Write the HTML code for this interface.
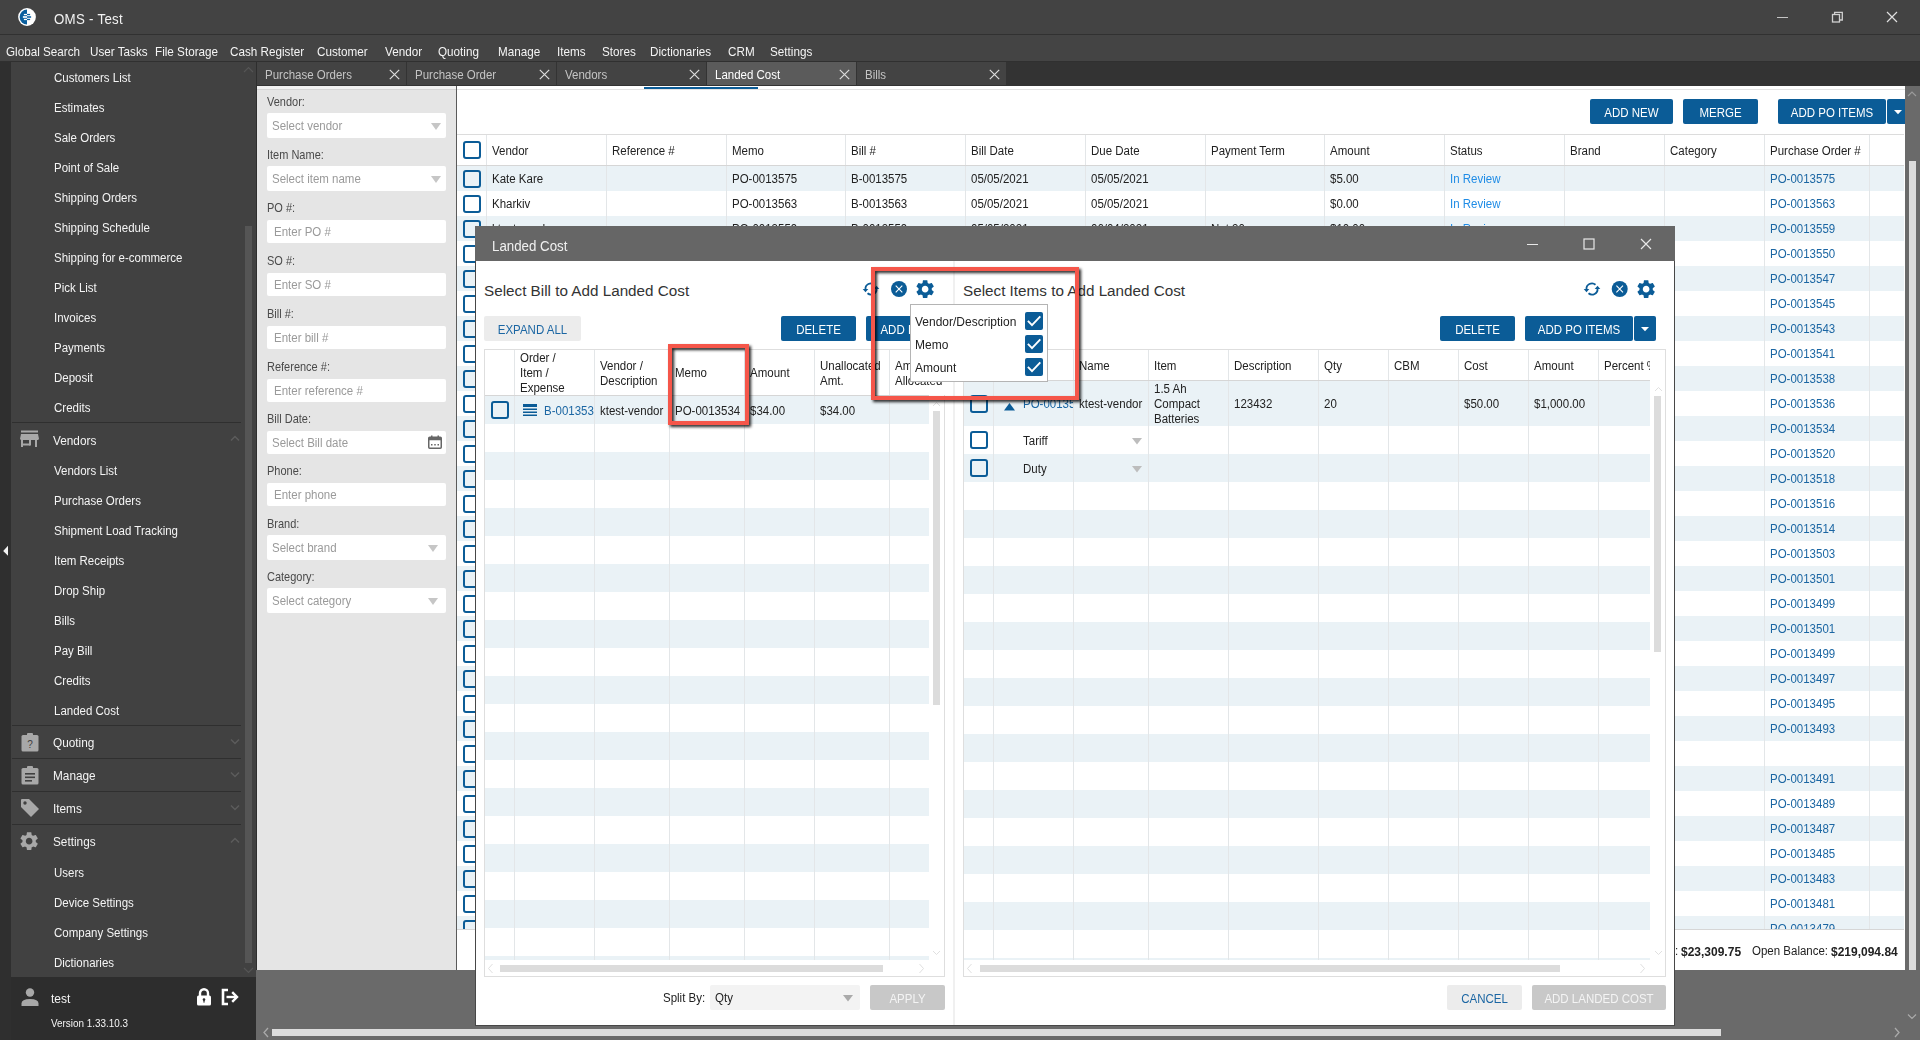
<!DOCTYPE html><html><head><meta charset="utf-8"><style>
html,body{margin:0;padding:0;} body{width:1920px;height:1040px;overflow:hidden;position:relative;background:#6a6a6a;font-family:"Liberation Sans", sans-serif;}
.t{position:absolute;white-space:nowrap;}
</style></head><body>
<div style="position:absolute;left:0px;top:0px;width:1920px;height:34px;background:#434343"></div>
<div style="position:absolute;left:0px;top:34px;width:1920px;height:1px;background:#313131"></div>
<svg style="position:absolute;left:17px;top:7px;" width="20" height="20" viewBox="0 0 20 20"><circle cx="10" cy="10" r="8.9" fill="#fff"/><path d="M10 2.6 A7.4 7.4 0 0 0 10 17.4 Z" fill="#0a5f9e"/><rect x="6.9" y="6.9" width="3.1" height="1.3" fill="#fff"/><rect x="10" y="6.9" width="3.1" height="1.3" fill="#0a5f9e"/><rect x="5.9" y="9.0" width="4.1" height="2" fill="#d5e4ef"/><rect x="10" y="9.0" width="4.1" height="2" fill="#3f84b8"/><rect x="6.9" y="11.8" width="3.1" height="1.3" fill="#fff"/><rect x="10" y="11.8" width="3.1" height="1.3" fill="#0a5f9e"/></svg>
<div class="t" style="left:54px;top:11.59px;font-size:14.90px;line-height:14.90px;color:#f2f2f2;font-weight:normal;transform:scaleX(0.8929);transform-origin:0 0;letter-spacing:0.3px">OMS - Test</div>
<div style="position:absolute;left:1777px;top:16.5px;width:11px;height:1.6px;background:#c4c4c4"></div>
<svg style="position:absolute;left:1831px;top:11px;" width="13" height="12" viewBox="0 0 13 12"><rect x="1.5" y="3.5" width="7" height="7.5" fill="none" stroke="#d0d0d0" stroke-width="1.3"/><path d="M3.6 3.5 V1.3 H11.3 V9 H8.5" fill="none" stroke="#d0d0d0" stroke-width="1.3"/></svg>
<svg style="position:absolute;left:1886px;top:11px;" width="12" height="12" viewBox="0 0 12 12"><path d="M1 1 L11 11 M11 1 L1 11" stroke="#e0e0e0" stroke-width="1.2"/></svg>
<div style="position:absolute;left:0px;top:35px;width:1920px;height:26px;background:#444444"></div>
<div style="position:absolute;left:0px;top:61px;width:1920px;height:1px;background:#303030"></div>
<div class="t" style="left:6px;top:45.11px;font-size:13.10px;line-height:13.10px;color:#f4f4f4;font-weight:normal;transform:scaleX(0.8929);transform-origin:0 0;">Global Search</div>
<div class="t" style="left:90px;top:45.11px;font-size:13.10px;line-height:13.10px;color:#f4f4f4;font-weight:normal;transform:scaleX(0.8929);transform-origin:0 0;">User Tasks</div>
<div class="t" style="left:155px;top:45.11px;font-size:13.10px;line-height:13.10px;color:#f4f4f4;font-weight:normal;transform:scaleX(0.8929);transform-origin:0 0;">File Storage</div>
<div class="t" style="left:230px;top:45.11px;font-size:13.10px;line-height:13.10px;color:#f4f4f4;font-weight:normal;transform:scaleX(0.8929);transform-origin:0 0;">Cash Register</div>
<div class="t" style="left:317px;top:45.11px;font-size:13.10px;line-height:13.10px;color:#f4f4f4;font-weight:normal;transform:scaleX(0.8929);transform-origin:0 0;">Customer</div>
<div class="t" style="left:385px;top:45.11px;font-size:13.10px;line-height:13.10px;color:#f4f4f4;font-weight:normal;transform:scaleX(0.8929);transform-origin:0 0;">Vendor</div>
<div class="t" style="left:438px;top:45.11px;font-size:13.10px;line-height:13.10px;color:#f4f4f4;font-weight:normal;transform:scaleX(0.8929);transform-origin:0 0;">Quoting</div>
<div class="t" style="left:498px;top:45.11px;font-size:13.10px;line-height:13.10px;color:#f4f4f4;font-weight:normal;transform:scaleX(0.8929);transform-origin:0 0;">Manage</div>
<div class="t" style="left:557px;top:45.11px;font-size:13.10px;line-height:13.10px;color:#f4f4f4;font-weight:normal;transform:scaleX(0.8929);transform-origin:0 0;">Items</div>
<div class="t" style="left:602px;top:45.11px;font-size:13.10px;line-height:13.10px;color:#f4f4f4;font-weight:normal;transform:scaleX(0.8929);transform-origin:0 0;">Stores</div>
<div class="t" style="left:650px;top:45.11px;font-size:13.10px;line-height:13.10px;color:#f4f4f4;font-weight:normal;transform:scaleX(0.8929);transform-origin:0 0;">Dictionaries</div>
<div class="t" style="left:728px;top:45.11px;font-size:13.10px;line-height:13.10px;color:#f4f4f4;font-weight:normal;transform:scaleX(0.8929);transform-origin:0 0;">CRM</div>
<div class="t" style="left:770px;top:45.11px;font-size:13.10px;line-height:13.10px;color:#f4f4f4;font-weight:normal;transform:scaleX(0.8929);transform-origin:0 0;">Settings</div>
<div style="position:absolute;left:0px;top:62px;width:11px;height:978px;background:#2f2f2f"></div>
<div style="position:absolute;left:11px;top:62px;width:245px;height:915px;background:#414141"></div>
<div style="position:absolute;left:256px;top:62px;width:1px;height:908px;background:#2e2e2e"></div>
<div style="position:absolute;left:245px;top:226px;width:7px;height:737px;background:#555555"></div>
<svg style="position:absolute;left:243px;top:66px;" width="11" height="8" viewBox="0 0 11 8"><path d="M1 6 L5.5 1.5 L10 6" fill="none" stroke="#555" stroke-width="1.2"/></svg>
<svg style="position:absolute;left:243px;top:966px;" width="11" height="8" viewBox="0 0 11 8"><path d="M1 2 L5.5 6.5 L10 2" fill="none" stroke="#555" stroke-width="1.2"/></svg>
<div class="t" style="left:54px;top:72.30px;font-size:12.88px;line-height:12.88px;color:#f4f4f4;font-weight:normal;transform:scaleX(0.8929);transform-origin:0 0;">Customers List</div>
<div class="t" style="left:54px;top:102.30px;font-size:12.88px;line-height:12.88px;color:#f4f4f4;font-weight:normal;transform:scaleX(0.8929);transform-origin:0 0;">Estimates</div>
<div class="t" style="left:54px;top:132.30px;font-size:12.88px;line-height:12.88px;color:#f4f4f4;font-weight:normal;transform:scaleX(0.8929);transform-origin:0 0;">Sale Orders</div>
<div class="t" style="left:54px;top:162.30px;font-size:12.88px;line-height:12.88px;color:#f4f4f4;font-weight:normal;transform:scaleX(0.8929);transform-origin:0 0;">Point of Sale</div>
<div class="t" style="left:54px;top:192.30px;font-size:12.88px;line-height:12.88px;color:#f4f4f4;font-weight:normal;transform:scaleX(0.8929);transform-origin:0 0;">Shipping Orders</div>
<div class="t" style="left:54px;top:222.30px;font-size:12.88px;line-height:12.88px;color:#f4f4f4;font-weight:normal;transform:scaleX(0.8929);transform-origin:0 0;">Shipping Schedule</div>
<div class="t" style="left:54px;top:252.30px;font-size:12.88px;line-height:12.88px;color:#f4f4f4;font-weight:normal;transform:scaleX(0.8929);transform-origin:0 0;">Shipping for e-commerce</div>
<div class="t" style="left:54px;top:282.30px;font-size:12.88px;line-height:12.88px;color:#f4f4f4;font-weight:normal;transform:scaleX(0.8929);transform-origin:0 0;">Pick List</div>
<div class="t" style="left:54px;top:312.30px;font-size:12.88px;line-height:12.88px;color:#f4f4f4;font-weight:normal;transform:scaleX(0.8929);transform-origin:0 0;">Invoices</div>
<div class="t" style="left:54px;top:342.30px;font-size:12.88px;line-height:12.88px;color:#f4f4f4;font-weight:normal;transform:scaleX(0.8929);transform-origin:0 0;">Payments</div>
<div class="t" style="left:54px;top:372.30px;font-size:12.88px;line-height:12.88px;color:#f4f4f4;font-weight:normal;transform:scaleX(0.8929);transform-origin:0 0;">Deposit</div>
<div class="t" style="left:54px;top:402.30px;font-size:12.88px;line-height:12.88px;color:#f4f4f4;font-weight:normal;transform:scaleX(0.8929);transform-origin:0 0;">Credits</div>
<div style="position:absolute;left:12px;top:422px;width:229px;height:1px;background:#2f2f2f"></div>
<div style="position:absolute;left:12px;top:725px;width:229px;height:1px;background:#2f2f2f"></div>
<div style="position:absolute;left:12px;top:758px;width:229px;height:1px;background:#2f2f2f"></div>
<div style="position:absolute;left:12px;top:791px;width:229px;height:1px;background:#2f2f2f"></div>
<div style="position:absolute;left:12px;top:824px;width:229px;height:1px;background:#2f2f2f"></div>
<div class="t" style="left:53px;top:434.01px;font-size:13.22px;line-height:13.22px;color:#f4f4f4;font-weight:normal;transform:scaleX(0.8929);transform-origin:0 0;">Vendors</div>
<div class="t" style="left:54px;top:465.30px;font-size:12.88px;line-height:12.88px;color:#f4f4f4;font-weight:normal;transform:scaleX(0.8929);transform-origin:0 0;">Vendors List</div>
<div class="t" style="left:54px;top:495.30px;font-size:12.88px;line-height:12.88px;color:#f4f4f4;font-weight:normal;transform:scaleX(0.8929);transform-origin:0 0;">Purchase Orders</div>
<div class="t" style="left:54px;top:525.30px;font-size:12.88px;line-height:12.88px;color:#f4f4f4;font-weight:normal;transform:scaleX(0.8929);transform-origin:0 0;">Shipment Load Tracking</div>
<div class="t" style="left:54px;top:555.30px;font-size:12.88px;line-height:12.88px;color:#f4f4f4;font-weight:normal;transform:scaleX(0.8929);transform-origin:0 0;">Item Receipts</div>
<div class="t" style="left:54px;top:585.30px;font-size:12.88px;line-height:12.88px;color:#f4f4f4;font-weight:normal;transform:scaleX(0.8929);transform-origin:0 0;">Drop Ship</div>
<div class="t" style="left:54px;top:615.30px;font-size:12.88px;line-height:12.88px;color:#f4f4f4;font-weight:normal;transform:scaleX(0.8929);transform-origin:0 0;">Bills</div>
<div class="t" style="left:54px;top:645.30px;font-size:12.88px;line-height:12.88px;color:#f4f4f4;font-weight:normal;transform:scaleX(0.8929);transform-origin:0 0;">Pay Bill</div>
<div class="t" style="left:54px;top:675.30px;font-size:12.88px;line-height:12.88px;color:#f4f4f4;font-weight:normal;transform:scaleX(0.8929);transform-origin:0 0;">Credits</div>
<div class="t" style="left:54px;top:705.30px;font-size:12.88px;line-height:12.88px;color:#f4f4f4;font-weight:normal;transform:scaleX(0.8929);transform-origin:0 0;">Landed Cost</div>
<div class="t" style="left:53px;top:736.01px;font-size:13.22px;line-height:13.22px;color:#f4f4f4;font-weight:normal;transform:scaleX(0.8929);transform-origin:0 0;">Quoting</div>
<div class="t" style="left:53px;top:769.01px;font-size:13.22px;line-height:13.22px;color:#f4f4f4;font-weight:normal;transform:scaleX(0.8929);transform-origin:0 0;">Manage</div>
<div class="t" style="left:53px;top:802.01px;font-size:13.22px;line-height:13.22px;color:#f4f4f4;font-weight:normal;transform:scaleX(0.8929);transform-origin:0 0;">Items</div>
<div class="t" style="left:53px;top:835.01px;font-size:13.22px;line-height:13.22px;color:#f4f4f4;font-weight:normal;transform:scaleX(0.8929);transform-origin:0 0;">Settings</div>
<div class="t" style="left:54px;top:867.30px;font-size:12.88px;line-height:12.88px;color:#f4f4f4;font-weight:normal;transform:scaleX(0.8929);transform-origin:0 0;">Users</div>
<div class="t" style="left:54px;top:897.30px;font-size:12.88px;line-height:12.88px;color:#f4f4f4;font-weight:normal;transform:scaleX(0.8929);transform-origin:0 0;">Device Settings</div>
<div class="t" style="left:54px;top:927.30px;font-size:12.88px;line-height:12.88px;color:#f4f4f4;font-weight:normal;transform:scaleX(0.8929);transform-origin:0 0;">Company Settings</div>
<div class="t" style="left:54px;top:957.30px;font-size:12.88px;line-height:12.88px;color:#f4f4f4;font-weight:normal;transform:scaleX(0.8929);transform-origin:0 0;">Dictionaries</div>
<svg style="position:absolute;left:230px;top:435px;" width="10" height="7" viewBox="0 0 10 7"><path d="M1 5.5 L5 1.5 L9 5.5" fill="none" stroke="#5c5c5c" stroke-width="1.5"/></svg>
<svg style="position:absolute;left:230px;top:738px;" width="10" height="7" viewBox="0 0 10 7"><path d="M1 1.5 L5 5.5 L9 1.5" fill="none" stroke="#5c5c5c" stroke-width="1.5"/></svg>
<svg style="position:absolute;left:230px;top:771px;" width="10" height="7" viewBox="0 0 10 7"><path d="M1 1.5 L5 5.5 L9 1.5" fill="none" stroke="#5c5c5c" stroke-width="1.5"/></svg>
<svg style="position:absolute;left:230px;top:804px;" width="10" height="7" viewBox="0 0 10 7"><path d="M1 1.5 L5 5.5 L9 1.5" fill="none" stroke="#5c5c5c" stroke-width="1.5"/></svg>
<svg style="position:absolute;left:230px;top:837px;" width="10" height="7" viewBox="0 0 10 7"><path d="M1 5.5 L5 1.5 L9 5.5" fill="none" stroke="#5c5c5c" stroke-width="1.5"/></svg>
<svg style="position:absolute;left:20px;top:430px;" width="20" height="18" viewBox="0 0 20 18"><rect x="1" y="0.5" width="17" height="2" fill="#a8a8a8"/><path d="M1 4 H18 L19 9 H0 Z" fill="#a8a8a8"/><rect x="0.5" y="9" width="18" height="1" fill="#a8a8a8"/><rect x="1" y="10" width="2" height="7" fill="#a8a8a8"/><rect x="15" y="10" width="2" height="7" fill="#a8a8a8"/><rect x="3" y="13.5" width="7" height="2" fill="#a8a8a8"/><rect x="9" y="10" width="2" height="5.5" fill="#a8a8a8"/></svg>
<svg style="position:absolute;left:21px;top:732px;" width="18" height="20" viewBox="0 0 18 20"><rect x="0.5" y="3" width="17" height="16.5" rx="1.5" fill="#a8a8a8"/><rect x="6" y="1" width="6" height="4" rx="1" fill="#a8a8a8"/><text x="9" y="16" font-size="10" text-anchor="middle" fill="#414141" font-family="Liberation Sans">?</text></svg>
<svg style="position:absolute;left:21px;top:765px;" width="18" height="20" viewBox="0 0 18 20"><rect x="0.5" y="3" width="17" height="16.5" rx="1.5" fill="#a8a8a8"/><rect x="6" y="1" width="6" height="4" rx="1" fill="#a8a8a8"/><rect x="4" y="8" width="10" height="1.6" fill="#414141"/><rect x="4" y="11.5" width="10" height="1.6" fill="#414141"/><rect x="4" y="15" width="7" height="1.6" fill="#414141"/></svg>
<svg style="position:absolute;left:20px;top:798px;" width="20" height="20" viewBox="0 0 20 20"><path d="M1 2 Q1 1 2 1 H9 L19 11 L11 19 L1 9 Z" fill="#a8a8a8"/><circle cx="5" cy="5" r="1.7" fill="#414141"/></svg>
<svg style="position:absolute;left:18.38px;top:829.88px" width="22.25" height="22.25" viewBox="0 0 24 24"><path fill-rule="evenodd" fill="#a8a8a8" d="M19.14 12.94c.04-.3.06-.61.06-.94 0-.32-.02-.64-.07-.94l2.03-1.58c.18-.14.23-.41.12-.61l-1.92-3.32c-.12-.22-.37-.29-.59-.22l-2.39.96c-.5-.38-1.03-.7-1.62-.94l-.36-2.54c-.04-.24-.24-.41-.48-.41h-3.84c-.24 0-.43.17-.47.41l-.36 2.54c-.59.24-1.13.57-1.62.94l-2.39-.96c-.22-.08-.47 0-.59.22L2.74 8.87c-.12.21-.08.47.12.61l2.03 1.58c-.05.3-.09.63-.09.94s.02.64.07.94l-2.03 1.58c-.18.14-.23.41-.12.61l1.92 3.32c.12.22.37.29.59.22l2.39-.96c.5.38 1.03.7 1.62.94l.36 2.54c.05.24.24.41.48.41h3.84c.24 0 .44-.17.47-.41l.36-2.54c.59-.24 1.13-.56 1.62-.94l2.39.96c.22.08.47 0 .59-.22l1.92-3.32c.12-.22.07-.47-.12-.61l-2.01-1.58zM12 15.6c-1.98 0-3.6-1.62-3.6-3.6s1.62-3.6 3.6-3.6 3.6 1.62 3.6 3.6-1.62 3.6-3.6 3.6z"/></svg>
<div style="position:absolute;left:11px;top:977px;width:245px;height:63px;background:#2d2d2d"></div>
<svg style="position:absolute;left:21px;top:988px;" width="18" height="18" viewBox="0 0 18 18"><circle cx="9" cy="4.5" r="4.2" fill="#a8a8a8"/><path d="M0.5 18 V15.5 Q0.5 11 9 11 Q17.5 11 17.5 15.5 V18 Z" fill="#a8a8a8"/></svg>
<div class="t" style="left:51px;top:991.82px;font-size:13.44px;line-height:13.44px;color:#f4f4f4;font-weight:normal;transform:scaleX(0.8929);transform-origin:0 0;">test</div>
<div class="t" style="left:51px;top:1017.81px;font-size:11.09px;line-height:11.09px;color:#f4f4f4;font-weight:normal;transform:scaleX(0.8929);transform-origin:0 0;">Version 1.33.10.3</div>
<svg style="position:absolute;left:195px;top:987px;" width="18" height="19" viewBox="0 0 18 19"><path d="M5 9 V6.2 A4 4 0 0 1 13 6.2 V9" fill="none" stroke="#fff" stroke-width="2.4"/><rect x="2" y="8.6" width="14" height="10" rx="1.6" fill="#fff"/><circle cx="9" cy="12.6" r="1.3" fill="#2d2d2d"/><rect x="8.4" y="13" width="1.2" height="2.6" fill="#2d2d2d"/></svg>
<svg style="position:absolute;left:219px;top:987px;" width="21" height="19" viewBox="0 0 21 19"><path d="M9 3 H4 V17 H9" fill="none" stroke="#fff" stroke-width="2.6"/><path d="M7.5 10 H17" stroke="#fff" stroke-width="2.4"/><path d="M13.2 5.2 L18 10 L13.2 14.8" fill="none" stroke="#fff" stroke-width="2.4"/></svg>
<svg style="position:absolute;left:2px;top:545px;" width="7" height="12" viewBox="0 0 7 12"><path d="M6 0.8 L1.2 5.9 L6 10.8 Z" fill="#f4f4f4"/></svg>
<div style="position:absolute;left:257px;top:62px;width:1663px;height:24px;background:#333333"></div>
<div style="position:absolute;left:257px;top:62px;width:149px;height:23px;background:#434343"></div>
<div class="t" style="left:265px;top:69.30px;font-size:12.88px;line-height:12.88px;color:#c4c4c4;font-weight:normal;transform:scaleX(0.8929);transform-origin:0 0;">Purchase Orders</div>
<svg style="position:absolute;left:389px;top:69px;" width="11" height="11" viewBox="0 0 11 11"><path d="M0.8 0.8 L10.2 10.2 M10.2 0.8 L0.8 10.2" stroke="#dcdcdc" stroke-width="1.2"/></svg>
<div style="position:absolute;left:407px;top:62px;width:149px;height:23px;background:#434343"></div>
<div class="t" style="left:415px;top:69.30px;font-size:12.88px;line-height:12.88px;color:#c4c4c4;font-weight:normal;transform:scaleX(0.8929);transform-origin:0 0;">Purchase Order</div>
<svg style="position:absolute;left:539px;top:69px;" width="11" height="11" viewBox="0 0 11 11"><path d="M0.8 0.8 L10.2 10.2 M10.2 0.8 L0.8 10.2" stroke="#dcdcdc" stroke-width="1.2"/></svg>
<div style="position:absolute;left:557px;top:62px;width:149px;height:23px;background:#434343"></div>
<div class="t" style="left:565px;top:69.30px;font-size:12.88px;line-height:12.88px;color:#c4c4c4;font-weight:normal;transform:scaleX(0.8929);transform-origin:0 0;">Vendors</div>
<svg style="position:absolute;left:689px;top:69px;" width="11" height="11" viewBox="0 0 11 11"><path d="M0.8 0.8 L10.2 10.2 M10.2 0.8 L0.8 10.2" stroke="#dcdcdc" stroke-width="1.2"/></svg>
<div style="position:absolute;left:707px;top:62px;width:149px;height:23px;background:#5b5b5b"></div>
<div class="t" style="left:715px;top:69.30px;font-size:12.88px;line-height:12.88px;color:#ffffff;font-weight:normal;transform:scaleX(0.8929);transform-origin:0 0;">Landed Cost</div>
<svg style="position:absolute;left:839px;top:69px;" width="11" height="11" viewBox="0 0 11 11"><path d="M0.8 0.8 L10.2 10.2 M10.2 0.8 L0.8 10.2" stroke="#dcdcdc" stroke-width="1.2"/></svg>
<div style="position:absolute;left:857px;top:62px;width:149px;height:23px;background:#434343"></div>
<div class="t" style="left:865px;top:69.30px;font-size:12.88px;line-height:12.88px;color:#c4c4c4;font-weight:normal;transform:scaleX(0.8929);transform-origin:0 0;">Bills</div>
<svg style="position:absolute;left:989px;top:69px;" width="11" height="11" viewBox="0 0 11 11"><path d="M0.8 0.8 L10.2 10.2 M10.2 0.8 L0.8 10.2" stroke="#dcdcdc" stroke-width="1.2"/></svg>
<div style="position:absolute;left:257px;top:86px;width:199px;height:884px;background:#e5e5e5"></div>
<div style="position:absolute;left:257px;top:86px;width:199px;height:3px;background:#f0f0f0"></div>
<div style="position:absolute;left:257px;top:89px;width:199px;height:1px;background:#d4d4d4"></div>
<div style="position:absolute;left:456px;top:86px;width:1px;height:884px;background:#5a5a5a"></div>
<div class="t" style="left:267px;top:95.77px;font-size:12.32px;line-height:12.32px;color:#4a4a4a;font-weight:normal;transform:scaleX(0.8929);transform-origin:0 0;">Vendor:</div>
<div style="position:absolute;left:267px;top:113px;width:179px;height:25px;background:#fff;border-radius:2px"></div>
<div class="t" style="left:272px;top:120.30px;font-size:12.88px;line-height:12.88px;color:#9a9a9a;font-weight:normal;transform:scaleX(0.8929);transform-origin:0 0;">Select vendor</div>
<svg style="position:absolute;left:431px;top:123px;" width="10" height="7" viewBox="0 0 10 7"><path d="M0 0 H10 L5 7 Z" fill="#c6c6c6"/></svg>
<div class="t" style="left:267px;top:148.77px;font-size:12.32px;line-height:12.32px;color:#4a4a4a;font-weight:normal;transform:scaleX(0.8929);transform-origin:0 0;">Item Name:</div>
<div style="position:absolute;left:267px;top:166px;width:179px;height:25px;background:#fff;border-radius:2px"></div>
<div class="t" style="left:272px;top:173.30px;font-size:12.88px;line-height:12.88px;color:#9a9a9a;font-weight:normal;transform:scaleX(0.8929);transform-origin:0 0;">Select item name</div>
<svg style="position:absolute;left:431px;top:176px;" width="10" height="7" viewBox="0 0 10 7"><path d="M0 0 H10 L5 7 Z" fill="#c6c6c6"/></svg>
<div class="t" style="left:267px;top:202.27px;font-size:12.32px;line-height:12.32px;color:#4a4a4a;font-weight:normal;transform:scaleX(0.8929);transform-origin:0 0;">PO #:</div>
<div style="position:absolute;left:267px;top:220px;width:179px;height:23px;background:#fff;border-radius:2px"></div>
<div class="t" style="left:273.5px;top:225.80px;font-size:12.88px;line-height:12.88px;color:#9a9a9a;font-weight:normal;transform:scaleX(0.8929);transform-origin:0 0;">Enter PO #</div>
<div class="t" style="left:267px;top:255.27px;font-size:12.32px;line-height:12.32px;color:#4a4a4a;font-weight:normal;transform:scaleX(0.8929);transform-origin:0 0;">SO #:</div>
<div style="position:absolute;left:267px;top:273px;width:179px;height:23px;background:#fff;border-radius:2px"></div>
<div class="t" style="left:273.5px;top:278.80px;font-size:12.88px;line-height:12.88px;color:#9a9a9a;font-weight:normal;transform:scaleX(0.8929);transform-origin:0 0;">Enter SO #</div>
<div class="t" style="left:267px;top:308.27px;font-size:12.32px;line-height:12.32px;color:#4a4a4a;font-weight:normal;transform:scaleX(0.8929);transform-origin:0 0;">Bill #:</div>
<div style="position:absolute;left:267px;top:326px;width:179px;height:23px;background:#fff;border-radius:2px"></div>
<div class="t" style="left:273.5px;top:331.80px;font-size:12.88px;line-height:12.88px;color:#9a9a9a;font-weight:normal;transform:scaleX(0.8929);transform-origin:0 0;">Enter bill #</div>
<div class="t" style="left:267px;top:361.27px;font-size:12.32px;line-height:12.32px;color:#4a4a4a;font-weight:normal;transform:scaleX(0.8929);transform-origin:0 0;">Reference #:</div>
<div style="position:absolute;left:267px;top:379px;width:179px;height:23px;background:#fff;border-radius:2px"></div>
<div class="t" style="left:273.5px;top:384.80px;font-size:12.88px;line-height:12.88px;color:#9a9a9a;font-weight:normal;transform:scaleX(0.8929);transform-origin:0 0;">Enter reference #</div>
<div class="t" style="left:267px;top:413.27px;font-size:12.32px;line-height:12.32px;color:#4a4a4a;font-weight:normal;transform:scaleX(0.8929);transform-origin:0 0;">Bill Date:</div>
<div style="position:absolute;left:267px;top:431px;width:179px;height:23px;background:#fff;border-radius:2px"></div>
<div class="t" style="left:272px;top:436.80px;font-size:12.88px;line-height:12.88px;color:#9a9a9a;font-weight:normal;transform:scaleX(0.8929);transform-origin:0 0;">Select Bill date</div>
<svg style="position:absolute;left:428px;top:435px;" width="14" height="14" viewBox="0 0 14 14"><rect x="0.75" y="2.25" width="12.5" height="11" rx="1" fill="none" stroke="#666" stroke-width="1.5"/><rect x="0.75" y="2.25" width="12.5" height="3" fill="#666"/><rect x="3" y="0.5" width="1.5" height="3" fill="#666"/><rect x="9.5" y="0.5" width="1.5" height="3" fill="#666"/><rect x="3" y="9" width="1.5" height="1.5" fill="#666"/><rect x="6.25" y="9" width="1.5" height="1.5" fill="#666"/><rect x="9.5" y="9" width="1.5" height="1.5" fill="#666"/></svg>
<div class="t" style="left:267px;top:465.27px;font-size:12.32px;line-height:12.32px;color:#4a4a4a;font-weight:normal;transform:scaleX(0.8929);transform-origin:0 0;">Phone:</div>
<div style="position:absolute;left:267px;top:483px;width:179px;height:23px;background:#fff;border-radius:2px"></div>
<div class="t" style="left:273.5px;top:488.80px;font-size:12.88px;line-height:12.88px;color:#9a9a9a;font-weight:normal;transform:scaleX(0.8929);transform-origin:0 0;">Enter phone</div>
<div class="t" style="left:267px;top:517.77px;font-size:12.32px;line-height:12.32px;color:#4a4a4a;font-weight:normal;transform:scaleX(0.8929);transform-origin:0 0;">Brand:</div>
<div style="position:absolute;left:267px;top:535px;width:179px;height:25px;background:#fff;border-radius:2px"></div>
<div class="t" style="left:272px;top:542.30px;font-size:12.88px;line-height:12.88px;color:#9a9a9a;font-weight:normal;transform:scaleX(0.8929);transform-origin:0 0;">Select brand</div>
<svg style="position:absolute;left:428px;top:545px;" width="10" height="7" viewBox="0 0 10 7"><path d="M0 0 H10 L5 7 Z" fill="#c6c6c6"/></svg>
<div class="t" style="left:267px;top:570.77px;font-size:12.32px;line-height:12.32px;color:#4a4a4a;font-weight:normal;transform:scaleX(0.8929);transform-origin:0 0;">Category:</div>
<div style="position:absolute;left:267px;top:588px;width:179px;height:25px;background:#fff;border-radius:2px"></div>
<div class="t" style="left:272px;top:595.30px;font-size:12.88px;line-height:12.88px;color:#9a9a9a;font-weight:normal;transform:scaleX(0.8929);transform-origin:0 0;">Select category</div>
<svg style="position:absolute;left:428px;top:598px;" width="10" height="7" viewBox="0 0 10 7"><path d="M0 0 H10 L5 7 Z" fill="#c6c6c6"/></svg>
<div style="position:absolute;left:457px;top:86px;width:1448px;height:884px;background:#ffffff"></div>
<div style="position:absolute;left:457px;top:89px;width:1448px;height:1px;background:#e4e4e4"></div>
<div style="position:absolute;left:644px;top:87px;width:114px;height:2px;background:#0b5c97"></div>
<div style="position:absolute;left:1905px;top:86px;width:15px;height:884px;background:#6a6a6a"></div>
<svg style="position:absolute;left:1906px;top:89px;" width="12" height="9" viewBox="0 0 12 9"><path d="M2 7 L6 3 L10 7" fill="none" stroke="#9a9a9a" stroke-width="1.2"/></svg>
<div style="position:absolute;left:1909px;top:161px;width:7px;height:809px;background:#dcdcdc"></div>
<div style="position:absolute;left:1590px;top:99px;width:83px;height:25px;background:#0b5c97;border-radius:2px"></div>
<div class="t" style="left:1590.0px;width:83px;text-align:center;top:106.80px;font-size:12.88px;line-height:12.88px;color:#fff;font-weight:normal;transform:scaleX(0.8929);transform-origin:50% 0;">ADD NEW</div>
<div style="position:absolute;left:1683px;top:99px;width:75px;height:25px;background:#0b5c97;border-radius:2px"></div>
<div class="t" style="left:1683.0px;width:75px;text-align:center;top:106.80px;font-size:12.88px;line-height:12.88px;color:#fff;font-weight:normal;transform:scaleX(0.8929);transform-origin:50% 0;">MERGE</div>
<div style="position:absolute;left:1778px;top:99px;width:108px;height:25px;background:#0b5c97;border-radius:2px"></div>
<div class="t" style="left:1778.0px;width:108px;text-align:center;top:106.80px;font-size:12.88px;line-height:12.88px;color:#fff;font-weight:normal;transform:scaleX(0.8929);transform-origin:50% 0;">ADD PO ITEMS</div>
<div style="position:absolute;left:1887px;top:99px;width:18px;height:25px;background:#0b5c97;border-radius:2px 0 0 2px"></div>
<svg style="position:absolute;left:1894px;top:110px;" width="8" height="5" viewBox="0 0 8 5"><path d="M0 0 H8 L4 4.3 Z" fill="#fff"/></svg>
<div style="position:absolute;left:457px;top:134px;width:1447px;height:1px;background:#dcdcdc"></div>
<div style="position:absolute;left:457px;top:165px;width:1447px;height:1px;background:#d6d6d6"></div>
<div style="position:absolute;left:457px;top:134px;width:1447px;height:795px;overflow:hidden">
<div style="position:absolute;left:0px;top:32px;width:1447px;height:25px;background:#eaf2f6"></div>
<div style="position:absolute;left:0px;top:82px;width:1447px;height:25px;background:#eaf2f6"></div>
<div style="position:absolute;left:0px;top:132px;width:1447px;height:25px;background:#eaf2f6"></div>
<div style="position:absolute;left:0px;top:182px;width:1447px;height:25px;background:#eaf2f6"></div>
<div style="position:absolute;left:0px;top:232px;width:1447px;height:25px;background:#eaf2f6"></div>
<div style="position:absolute;left:0px;top:282px;width:1447px;height:25px;background:#eaf2f6"></div>
<div style="position:absolute;left:0px;top:332px;width:1447px;height:25px;background:#eaf2f6"></div>
<div style="position:absolute;left:0px;top:382px;width:1447px;height:25px;background:#eaf2f6"></div>
<div style="position:absolute;left:0px;top:432px;width:1447px;height:25px;background:#eaf2f6"></div>
<div style="position:absolute;left:0px;top:482px;width:1447px;height:25px;background:#eaf2f6"></div>
<div style="position:absolute;left:0px;top:532px;width:1447px;height:25px;background:#eaf2f6"></div>
<div style="position:absolute;left:0px;top:582px;width:1447px;height:25px;background:#eaf2f6"></div>
<div style="position:absolute;left:0px;top:632px;width:1447px;height:25px;background:#eaf2f6"></div>
<div style="position:absolute;left:0px;top:682px;width:1447px;height:25px;background:#eaf2f6"></div>
<div style="position:absolute;left:0px;top:732px;width:1447px;height:25px;background:#eaf2f6"></div>
<div style="position:absolute;left:0px;top:782px;width:1447px;height:25px;background:#eaf2f6"></div>
<div style="position:absolute;left:29px;top:0px;width:1px;height:795px;background:#e3e6e8"></div>
<div style="position:absolute;left:149px;top:0px;width:1px;height:795px;background:#e3e6e8"></div>
<div style="position:absolute;left:269px;top:0px;width:1px;height:795px;background:#e3e6e8"></div>
<div style="position:absolute;left:388px;top:0px;width:1px;height:795px;background:#e3e6e8"></div>
<div style="position:absolute;left:508px;top:0px;width:1px;height:795px;background:#e3e6e8"></div>
<div style="position:absolute;left:628px;top:0px;width:1px;height:795px;background:#e3e6e8"></div>
<div style="position:absolute;left:748px;top:0px;width:1px;height:795px;background:#e3e6e8"></div>
<div style="position:absolute;left:867px;top:0px;width:1px;height:795px;background:#e3e6e8"></div>
<div style="position:absolute;left:987px;top:0px;width:1px;height:795px;background:#e3e6e8"></div>
<div style="position:absolute;left:1107px;top:0px;width:1px;height:795px;background:#e3e6e8"></div>
<div style="position:absolute;left:1207px;top:0px;width:1px;height:795px;background:#e3e6e8"></div>
<div style="position:absolute;left:1307px;top:0px;width:1px;height:795px;background:#e3e6e8"></div>
<div style="position:absolute;left:1412px;top:0px;width:1px;height:795px;background:#e3e6e8"></div>
<div class="t" style="left:1313px;top:39.30px;font-size:12.88px;line-height:12.88px;color:#1b66a3;font-weight:normal;transform:scaleX(0.8929);transform-origin:0 0;">PO-0013575</div>
<div class="t" style="left:1313px;top:64.30px;font-size:12.88px;line-height:12.88px;color:#1b66a3;font-weight:normal;transform:scaleX(0.8929);transform-origin:0 0;">PO-0013563</div>
<div class="t" style="left:1313px;top:89.30px;font-size:12.88px;line-height:12.88px;color:#1b66a3;font-weight:normal;transform:scaleX(0.8929);transform-origin:0 0;">PO-0013559</div>
<div class="t" style="left:1313px;top:114.30px;font-size:12.88px;line-height:12.88px;color:#1b66a3;font-weight:normal;transform:scaleX(0.8929);transform-origin:0 0;">PO-0013550</div>
<div class="t" style="left:1313px;top:139.30px;font-size:12.88px;line-height:12.88px;color:#1b66a3;font-weight:normal;transform:scaleX(0.8929);transform-origin:0 0;">PO-0013547</div>
<div class="t" style="left:1313px;top:164.30px;font-size:12.88px;line-height:12.88px;color:#1b66a3;font-weight:normal;transform:scaleX(0.8929);transform-origin:0 0;">PO-0013545</div>
<div class="t" style="left:1313px;top:189.30px;font-size:12.88px;line-height:12.88px;color:#1b66a3;font-weight:normal;transform:scaleX(0.8929);transform-origin:0 0;">PO-0013543</div>
<div class="t" style="left:1313px;top:214.30px;font-size:12.88px;line-height:12.88px;color:#1b66a3;font-weight:normal;transform:scaleX(0.8929);transform-origin:0 0;">PO-0013541</div>
<div class="t" style="left:1313px;top:239.30px;font-size:12.88px;line-height:12.88px;color:#1b66a3;font-weight:normal;transform:scaleX(0.8929);transform-origin:0 0;">PO-0013538</div>
<div class="t" style="left:1313px;top:264.30px;font-size:12.88px;line-height:12.88px;color:#1b66a3;font-weight:normal;transform:scaleX(0.8929);transform-origin:0 0;">PO-0013536</div>
<div class="t" style="left:1313px;top:289.30px;font-size:12.88px;line-height:12.88px;color:#1b66a3;font-weight:normal;transform:scaleX(0.8929);transform-origin:0 0;">PO-0013534</div>
<div class="t" style="left:1313px;top:314.30px;font-size:12.88px;line-height:12.88px;color:#1b66a3;font-weight:normal;transform:scaleX(0.8929);transform-origin:0 0;">PO-0013520</div>
<div class="t" style="left:1313px;top:339.30px;font-size:12.88px;line-height:12.88px;color:#1b66a3;font-weight:normal;transform:scaleX(0.8929);transform-origin:0 0;">PO-0013518</div>
<div class="t" style="left:1313px;top:364.30px;font-size:12.88px;line-height:12.88px;color:#1b66a3;font-weight:normal;transform:scaleX(0.8929);transform-origin:0 0;">PO-0013516</div>
<div class="t" style="left:1313px;top:389.30px;font-size:12.88px;line-height:12.88px;color:#1b66a3;font-weight:normal;transform:scaleX(0.8929);transform-origin:0 0;">PO-0013514</div>
<div class="t" style="left:1313px;top:414.30px;font-size:12.88px;line-height:12.88px;color:#1b66a3;font-weight:normal;transform:scaleX(0.8929);transform-origin:0 0;">PO-0013503</div>
<div class="t" style="left:1313px;top:439.30px;font-size:12.88px;line-height:12.88px;color:#1b66a3;font-weight:normal;transform:scaleX(0.8929);transform-origin:0 0;">PO-0013501</div>
<div class="t" style="left:1313px;top:464.30px;font-size:12.88px;line-height:12.88px;color:#1b66a3;font-weight:normal;transform:scaleX(0.8929);transform-origin:0 0;">PO-0013499</div>
<div class="t" style="left:1313px;top:489.30px;font-size:12.88px;line-height:12.88px;color:#1b66a3;font-weight:normal;transform:scaleX(0.8929);transform-origin:0 0;">PO-0013501</div>
<div class="t" style="left:1313px;top:514.30px;font-size:12.88px;line-height:12.88px;color:#1b66a3;font-weight:normal;transform:scaleX(0.8929);transform-origin:0 0;">PO-0013499</div>
<div class="t" style="left:1313px;top:539.30px;font-size:12.88px;line-height:12.88px;color:#1b66a3;font-weight:normal;transform:scaleX(0.8929);transform-origin:0 0;">PO-0013497</div>
<div class="t" style="left:1313px;top:564.30px;font-size:12.88px;line-height:12.88px;color:#1b66a3;font-weight:normal;transform:scaleX(0.8929);transform-origin:0 0;">PO-0013495</div>
<div class="t" style="left:1313px;top:589.30px;font-size:12.88px;line-height:12.88px;color:#1b66a3;font-weight:normal;transform:scaleX(0.8929);transform-origin:0 0;">PO-0013493</div>
<div class="t" style="left:1313px;top:639.30px;font-size:12.88px;line-height:12.88px;color:#1b66a3;font-weight:normal;transform:scaleX(0.8929);transform-origin:0 0;">PO-0013491</div>
<div class="t" style="left:1313px;top:664.30px;font-size:12.88px;line-height:12.88px;color:#1b66a3;font-weight:normal;transform:scaleX(0.8929);transform-origin:0 0;">PO-0013489</div>
<div class="t" style="left:1313px;top:689.30px;font-size:12.88px;line-height:12.88px;color:#1b66a3;font-weight:normal;transform:scaleX(0.8929);transform-origin:0 0;">PO-0013487</div>
<div class="t" style="left:1313px;top:714.30px;font-size:12.88px;line-height:12.88px;color:#1b66a3;font-weight:normal;transform:scaleX(0.8929);transform-origin:0 0;">PO-0013485</div>
<div class="t" style="left:1313px;top:739.30px;font-size:12.88px;line-height:12.88px;color:#1b66a3;font-weight:normal;transform:scaleX(0.8929);transform-origin:0 0;">PO-0013483</div>
<div class="t" style="left:1313px;top:764.30px;font-size:12.88px;line-height:12.88px;color:#1b66a3;font-weight:normal;transform:scaleX(0.8929);transform-origin:0 0;">PO-0013481</div>
<div class="t" style="left:1313px;top:789.30px;font-size:12.88px;line-height:12.88px;color:#1b66a3;font-weight:normal;transform:scaleX(0.8929);transform-origin:0 0;">PO-0013479</div>
<svg style="position:absolute;left:6px;top:36px;" width="18" height="18" viewBox="0 0 18 18"><rect x="1" y="1" width="16" height="16" rx="2" fill="none" stroke="#0b5c97" stroke-width="2"/></svg>
<svg style="position:absolute;left:6px;top:61px;" width="18" height="18" viewBox="0 0 18 18"><rect x="1" y="1" width="16" height="16" rx="2" fill="none" stroke="#0b5c97" stroke-width="2"/></svg>
<svg style="position:absolute;left:6px;top:86px;" width="18" height="18" viewBox="0 0 18 18"><rect x="1" y="1" width="16" height="16" rx="2" fill="none" stroke="#0b5c97" stroke-width="2"/></svg>
<svg style="position:absolute;left:6px;top:111px;" width="18" height="18" viewBox="0 0 18 18"><rect x="1" y="1" width="16" height="16" rx="2" fill="none" stroke="#0b5c97" stroke-width="2"/></svg>
<svg style="position:absolute;left:6px;top:136px;" width="18" height="18" viewBox="0 0 18 18"><rect x="1" y="1" width="16" height="16" rx="2" fill="none" stroke="#0b5c97" stroke-width="2"/></svg>
<svg style="position:absolute;left:6px;top:161px;" width="18" height="18" viewBox="0 0 18 18"><rect x="1" y="1" width="16" height="16" rx="2" fill="none" stroke="#0b5c97" stroke-width="2"/></svg>
<svg style="position:absolute;left:6px;top:186px;" width="18" height="18" viewBox="0 0 18 18"><rect x="1" y="1" width="16" height="16" rx="2" fill="none" stroke="#0b5c97" stroke-width="2"/></svg>
<svg style="position:absolute;left:6px;top:211px;" width="18" height="18" viewBox="0 0 18 18"><rect x="1" y="1" width="16" height="16" rx="2" fill="none" stroke="#0b5c97" stroke-width="2"/></svg>
<svg style="position:absolute;left:6px;top:236px;" width="18" height="18" viewBox="0 0 18 18"><rect x="1" y="1" width="16" height="16" rx="2" fill="none" stroke="#0b5c97" stroke-width="2"/></svg>
<svg style="position:absolute;left:6px;top:261px;" width="18" height="18" viewBox="0 0 18 18"><rect x="1" y="1" width="16" height="16" rx="2" fill="none" stroke="#0b5c97" stroke-width="2"/></svg>
<svg style="position:absolute;left:6px;top:286px;" width="18" height="18" viewBox="0 0 18 18"><rect x="1" y="1" width="16" height="16" rx="2" fill="none" stroke="#0b5c97" stroke-width="2"/></svg>
<svg style="position:absolute;left:6px;top:311px;" width="18" height="18" viewBox="0 0 18 18"><rect x="1" y="1" width="16" height="16" rx="2" fill="none" stroke="#0b5c97" stroke-width="2"/></svg>
<svg style="position:absolute;left:6px;top:336px;" width="18" height="18" viewBox="0 0 18 18"><rect x="1" y="1" width="16" height="16" rx="2" fill="none" stroke="#0b5c97" stroke-width="2"/></svg>
<svg style="position:absolute;left:6px;top:361px;" width="18" height="18" viewBox="0 0 18 18"><rect x="1" y="1" width="16" height="16" rx="2" fill="none" stroke="#0b5c97" stroke-width="2"/></svg>
<svg style="position:absolute;left:6px;top:386px;" width="18" height="18" viewBox="0 0 18 18"><rect x="1" y="1" width="16" height="16" rx="2" fill="none" stroke="#0b5c97" stroke-width="2"/></svg>
<svg style="position:absolute;left:6px;top:411px;" width="18" height="18" viewBox="0 0 18 18"><rect x="1" y="1" width="16" height="16" rx="2" fill="none" stroke="#0b5c97" stroke-width="2"/></svg>
<svg style="position:absolute;left:6px;top:436px;" width="18" height="18" viewBox="0 0 18 18"><rect x="1" y="1" width="16" height="16" rx="2" fill="none" stroke="#0b5c97" stroke-width="2"/></svg>
<svg style="position:absolute;left:6px;top:461px;" width="18" height="18" viewBox="0 0 18 18"><rect x="1" y="1" width="16" height="16" rx="2" fill="none" stroke="#0b5c97" stroke-width="2"/></svg>
<svg style="position:absolute;left:6px;top:486px;" width="18" height="18" viewBox="0 0 18 18"><rect x="1" y="1" width="16" height="16" rx="2" fill="none" stroke="#0b5c97" stroke-width="2"/></svg>
<svg style="position:absolute;left:6px;top:511px;" width="18" height="18" viewBox="0 0 18 18"><rect x="1" y="1" width="16" height="16" rx="2" fill="none" stroke="#0b5c97" stroke-width="2"/></svg>
<svg style="position:absolute;left:6px;top:536px;" width="18" height="18" viewBox="0 0 18 18"><rect x="1" y="1" width="16" height="16" rx="2" fill="none" stroke="#0b5c97" stroke-width="2"/></svg>
<svg style="position:absolute;left:6px;top:561px;" width="18" height="18" viewBox="0 0 18 18"><rect x="1" y="1" width="16" height="16" rx="2" fill="none" stroke="#0b5c97" stroke-width="2"/></svg>
<svg style="position:absolute;left:6px;top:586px;" width="18" height="18" viewBox="0 0 18 18"><rect x="1" y="1" width="16" height="16" rx="2" fill="none" stroke="#0b5c97" stroke-width="2"/></svg>
<svg style="position:absolute;left:6px;top:611px;" width="18" height="18" viewBox="0 0 18 18"><rect x="1" y="1" width="16" height="16" rx="2" fill="none" stroke="#0b5c97" stroke-width="2"/></svg>
<svg style="position:absolute;left:6px;top:636px;" width="18" height="18" viewBox="0 0 18 18"><rect x="1" y="1" width="16" height="16" rx="2" fill="none" stroke="#0b5c97" stroke-width="2"/></svg>
<svg style="position:absolute;left:6px;top:661px;" width="18" height="18" viewBox="0 0 18 18"><rect x="1" y="1" width="16" height="16" rx="2" fill="none" stroke="#0b5c97" stroke-width="2"/></svg>
<svg style="position:absolute;left:6px;top:686px;" width="18" height="18" viewBox="0 0 18 18"><rect x="1" y="1" width="16" height="16" rx="2" fill="none" stroke="#0b5c97" stroke-width="2"/></svg>
<svg style="position:absolute;left:6px;top:711px;" width="18" height="18" viewBox="0 0 18 18"><rect x="1" y="1" width="16" height="16" rx="2" fill="none" stroke="#0b5c97" stroke-width="2"/></svg>
<svg style="position:absolute;left:6px;top:736px;" width="18" height="18" viewBox="0 0 18 18"><rect x="1" y="1" width="16" height="16" rx="2" fill="none" stroke="#0b5c97" stroke-width="2"/></svg>
<svg style="position:absolute;left:6px;top:761px;" width="18" height="18" viewBox="0 0 18 18"><rect x="1" y="1" width="16" height="16" rx="2" fill="none" stroke="#0b5c97" stroke-width="2"/></svg>
<svg style="position:absolute;left:6px;top:786px;" width="18" height="18" viewBox="0 0 18 18"><rect x="1" y="1" width="16" height="16" rx="2" fill="none" stroke="#0b5c97" stroke-width="2"/></svg>
<div class="t" style="left:35px;top:39.30px;font-size:12.88px;line-height:12.88px;color:#222;font-weight:normal;transform:scaleX(0.8929);transform-origin:0 0;">Kate Kare</div>
<div class="t" style="left:275px;top:39.30px;font-size:12.88px;line-height:12.88px;color:#222;font-weight:normal;transform:scaleX(0.8929);transform-origin:0 0;">PO-0013575</div>
<div class="t" style="left:394px;top:39.30px;font-size:12.88px;line-height:12.88px;color:#222;font-weight:normal;transform:scaleX(0.8929);transform-origin:0 0;">B-0013575</div>
<div class="t" style="left:514px;top:39.30px;font-size:12.88px;line-height:12.88px;color:#222;font-weight:normal;transform:scaleX(0.8929);transform-origin:0 0;">05/05/2021</div>
<div class="t" style="left:634px;top:39.30px;font-size:12.88px;line-height:12.88px;color:#222;font-weight:normal;transform:scaleX(0.8929);transform-origin:0 0;">05/05/2021</div>
<div class="t" style="left:873px;top:39.30px;font-size:12.88px;line-height:12.88px;color:#222;font-weight:normal;transform:scaleX(0.8929);transform-origin:0 0;">$5.00</div>
<div class="t" style="left:993px;top:39.30px;font-size:12.88px;line-height:12.88px;color:#1f8ce6;font-weight:normal;transform:scaleX(0.8929);transform-origin:0 0;">In Review</div>
<div class="t" style="left:35px;top:64.30px;font-size:12.88px;line-height:12.88px;color:#222;font-weight:normal;transform:scaleX(0.8929);transform-origin:0 0;">Kharkiv</div>
<div class="t" style="left:275px;top:64.30px;font-size:12.88px;line-height:12.88px;color:#222;font-weight:normal;transform:scaleX(0.8929);transform-origin:0 0;">PO-0013563</div>
<div class="t" style="left:394px;top:64.30px;font-size:12.88px;line-height:12.88px;color:#222;font-weight:normal;transform:scaleX(0.8929);transform-origin:0 0;">B-0013563</div>
<div class="t" style="left:514px;top:64.30px;font-size:12.88px;line-height:12.88px;color:#222;font-weight:normal;transform:scaleX(0.8929);transform-origin:0 0;">05/05/2021</div>
<div class="t" style="left:634px;top:64.30px;font-size:12.88px;line-height:12.88px;color:#222;font-weight:normal;transform:scaleX(0.8929);transform-origin:0 0;">05/05/2021</div>
<div class="t" style="left:873px;top:64.30px;font-size:12.88px;line-height:12.88px;color:#222;font-weight:normal;transform:scaleX(0.8929);transform-origin:0 0;">$0.00</div>
<div class="t" style="left:993px;top:64.30px;font-size:12.88px;line-height:12.88px;color:#1f8ce6;font-weight:normal;transform:scaleX(0.8929);transform-origin:0 0;">In Review</div>
<div class="t" style="left:35px;top:89.30px;font-size:12.88px;line-height:12.88px;color:#222;font-weight:normal;transform:scaleX(0.8929);transform-origin:0 0;">ktest-vendor</div>
<div class="t" style="left:275px;top:89.30px;font-size:12.88px;line-height:12.88px;color:#222;font-weight:normal;transform:scaleX(0.8929);transform-origin:0 0;">PO-0013559</div>
<div class="t" style="left:394px;top:89.30px;font-size:12.88px;line-height:12.88px;color:#222;font-weight:normal;transform:scaleX(0.8929);transform-origin:0 0;">B-0013559</div>
<div class="t" style="left:514px;top:89.30px;font-size:12.88px;line-height:12.88px;color:#222;font-weight:normal;transform:scaleX(0.8929);transform-origin:0 0;">05/05/2021</div>
<div class="t" style="left:634px;top:89.30px;font-size:12.88px;line-height:12.88px;color:#222;font-weight:normal;transform:scaleX(0.8929);transform-origin:0 0;">06/04/2021</div>
<div class="t" style="left:754px;top:89.30px;font-size:12.88px;line-height:12.88px;color:#222;font-weight:normal;transform:scaleX(0.8929);transform-origin:0 0;">Net 30</div>
<div class="t" style="left:873px;top:89.30px;font-size:12.88px;line-height:12.88px;color:#222;font-weight:normal;transform:scaleX(0.8929);transform-origin:0 0;">$10.00</div>
<div class="t" style="left:993px;top:89.30px;font-size:12.88px;line-height:12.88px;color:#1f8ce6;font-weight:normal;transform:scaleX(0.8929);transform-origin:0 0;">In Review</div>
</div>
<div style="position:absolute;left:457px;top:134px;width:1447px;height:31px;background:#fff"></div>
<div style="position:absolute;left:457px;top:134px;width:1447px;height:1px;background:#dcdcdc"></div>
<div style="position:absolute;left:457px;top:165px;width:1447px;height:1px;background:#d6d6d6"></div>
<div style="position:absolute;left:486px;top:135px;width:1px;height:30px;background:#e3e6e8"></div>
<div style="position:absolute;left:606px;top:135px;width:1px;height:30px;background:#e3e6e8"></div>
<div style="position:absolute;left:726px;top:135px;width:1px;height:30px;background:#e3e6e8"></div>
<div style="position:absolute;left:845px;top:135px;width:1px;height:30px;background:#e3e6e8"></div>
<div style="position:absolute;left:965px;top:135px;width:1px;height:30px;background:#e3e6e8"></div>
<div style="position:absolute;left:1085px;top:135px;width:1px;height:30px;background:#e3e6e8"></div>
<div style="position:absolute;left:1205px;top:135px;width:1px;height:30px;background:#e3e6e8"></div>
<div style="position:absolute;left:1324px;top:135px;width:1px;height:30px;background:#e3e6e8"></div>
<div style="position:absolute;left:1444px;top:135px;width:1px;height:30px;background:#e3e6e8"></div>
<div style="position:absolute;left:1564px;top:135px;width:1px;height:30px;background:#e3e6e8"></div>
<div style="position:absolute;left:1664px;top:135px;width:1px;height:30px;background:#e3e6e8"></div>
<div style="position:absolute;left:1764px;top:135px;width:1px;height:30px;background:#e3e6e8"></div>
<div style="position:absolute;left:1869px;top:135px;width:1px;height:30px;background:#e3e6e8"></div>
<div class="t" style="left:492px;top:145.30px;font-size:12.88px;line-height:12.88px;color:#222;font-weight:normal;transform:scaleX(0.8929);transform-origin:0 0;">Vendor</div>
<div class="t" style="left:612px;top:145.30px;font-size:12.88px;line-height:12.88px;color:#222;font-weight:normal;transform:scaleX(0.8929);transform-origin:0 0;">Reference #</div>
<div class="t" style="left:732px;top:145.30px;font-size:12.88px;line-height:12.88px;color:#222;font-weight:normal;transform:scaleX(0.8929);transform-origin:0 0;">Memo</div>
<div class="t" style="left:851px;top:145.30px;font-size:12.88px;line-height:12.88px;color:#222;font-weight:normal;transform:scaleX(0.8929);transform-origin:0 0;">Bill #</div>
<div class="t" style="left:971px;top:145.30px;font-size:12.88px;line-height:12.88px;color:#222;font-weight:normal;transform:scaleX(0.8929);transform-origin:0 0;">Bill Date</div>
<div class="t" style="left:1091px;top:145.30px;font-size:12.88px;line-height:12.88px;color:#222;font-weight:normal;transform:scaleX(0.8929);transform-origin:0 0;">Due Date</div>
<div class="t" style="left:1211px;top:145.30px;font-size:12.88px;line-height:12.88px;color:#222;font-weight:normal;transform:scaleX(0.8929);transform-origin:0 0;">Payment Term</div>
<div class="t" style="left:1330px;top:145.30px;font-size:12.88px;line-height:12.88px;color:#222;font-weight:normal;transform:scaleX(0.8929);transform-origin:0 0;">Amount</div>
<div class="t" style="left:1450px;top:145.30px;font-size:12.88px;line-height:12.88px;color:#222;font-weight:normal;transform:scaleX(0.8929);transform-origin:0 0;">Status</div>
<div class="t" style="left:1570px;top:145.30px;font-size:12.88px;line-height:12.88px;color:#222;font-weight:normal;transform:scaleX(0.8929);transform-origin:0 0;">Brand</div>
<div class="t" style="left:1670px;top:145.30px;font-size:12.88px;line-height:12.88px;color:#222;font-weight:normal;transform:scaleX(0.8929);transform-origin:0 0;">Category</div>
<div class="t" style="left:1770px;top:145.30px;font-size:12.88px;line-height:12.88px;color:#222;font-weight:normal;transform:scaleX(0.8929);transform-origin:0 0;">Purchase Order #</div>
<svg style="position:absolute;left:463px;top:141px;" width="18" height="18" viewBox="0 0 18 18"><rect x="1" y="1" width="16" height="16" rx="2" fill="none" stroke="#0b5c97" stroke-width="2"/></svg>
<div style="position:absolute;left:457px;top:929px;width:1447px;height:1px;background:#d6d6d6"></div>
<div class="t" style="left:1675px;top:945.30px;font-size:12.88px;line-height:12.88px;color:#222;font-weight:normal;transform:scaleX(0.8929);transform-origin:0 0;">:</div>
<div class="t" style="left:1681px;top:944.82px;font-size:13.44px;line-height:13.44px;color:#222;font-weight:bold;transform:scaleX(0.8929);transform-origin:0 0;">$23,309.75</div>
<div class="t" style="left:1752px;top:945.30px;font-size:12.88px;line-height:12.88px;color:#222;font-weight:normal;transform:scaleX(0.8929);transform-origin:0 0;">Open Balance:</div>
<div class="t" style="left:1831px;top:944.82px;font-size:13.44px;line-height:13.44px;color:#222;font-weight:bold;transform:scaleX(0.8929);transform-origin:0 0;">$219,094.84</div>
<div style="position:absolute;left:272px;top:1029px;width:1449px;height:7px;background:#dcdcdc"></div>
<svg style="position:absolute;left:262px;top:1027px;" width="8" height="11" viewBox="0 0 8 11"><path d="M6 1 L2 5.5 L6 10" fill="none" stroke="#aaa" stroke-width="1.3"/></svg>
<svg style="position:absolute;left:1893px;top:1027px;" width="8" height="11" viewBox="0 0 8 11"><path d="M2 1 L6 5.5 L2 10" fill="none" stroke="#aaa" stroke-width="1.3"/></svg>
<svg style="position:absolute;left:1906px;top:1013px;" width="12" height="8" viewBox="0 0 12 8"><path d="M2 1.5 L6 5.5 L10 1.5" fill="none" stroke="#aaa" stroke-width="1.2"/></svg>
<div style="position:absolute;left:475px;top:226px;width:1200px;height:800px;background:#ffffff;box-sizing:border-box;border:1px solid #474747;border-top:none"></div>
<div style="position:absolute;left:475px;top:226px;width:1200px;height:35px;background:#666666"></div>
<div class="t" style="left:492px;top:238.59px;font-size:14.90px;line-height:14.90px;color:#f0f0f0;font-weight:normal;transform:scaleX(0.8929);transform-origin:0 0;">Landed Cost</div>
<div style="position:absolute;left:1527px;top:244px;width:11px;height:1px;background:#e8e8e8"></div>
<svg style="position:absolute;left:1583px;top:238px;" width="12" height="12" viewBox="0 0 12 12"><rect x="1" y="1" width="10" height="10" fill="none" stroke="#e8e8e8" stroke-width="1.2"/></svg>
<svg style="position:absolute;left:1640px;top:238px;" width="12" height="12" viewBox="0 0 12 12"><path d="M1 1 L11 11 M11 1 L1 11" stroke="#e8e8e8" stroke-width="1.2"/></svg>
<div class="t" style="left:484px;top:283.29px;font-size:15.25px;line-height:15.25px;color:#333333;font-weight:normal;transform:scaleX(1.0000);transform-origin:0 0;">Select Bill to Add Landed Cost</div>
<svg style="position:absolute;left:855px;top:275px;" width="90" height="30" viewBox="0 0 90 30"><g transform="translate(16,14)"><path d="M-5.5 0.5 A5.5 5.5 0 0 1 3.5 -4.3" fill="none" stroke="#0b5c97" stroke-width="1.8"/><path d="M5.5 -0.5 A5.5 5.5 0 0 1 -3.5 4.3" fill="none" stroke="#0b5c97" stroke-width="1.8"/><path d="M-8.3 0 H-2.7 L-5.5 3.3 Z" fill="#0b5c97"/><path d="M8.3 0 H2.7 L5.5 -3.3 Z" fill="#0b5c97"/></g><circle cx="44" cy="14" r="8" fill="#0b5c97"/><path d="M40.7 10.7 L47.3 17.3 M47.3 10.7 L40.7 17.3" stroke="#fff" stroke-width="1.1"/></svg>
<svg style="position:absolute;left:914.17px;top:277.88px" width="22.25" height="22.25" viewBox="0 0 24 24"><path fill-rule="evenodd" fill="#0b5c97" d="M19.14 12.94c.04-.3.06-.61.06-.94 0-.32-.02-.64-.07-.94l2.03-1.58c.18-.14.23-.41.12-.61l-1.92-3.32c-.12-.22-.37-.29-.59-.22l-2.39.96c-.5-.38-1.03-.7-1.62-.94l-.36-2.54c-.04-.24-.24-.41-.48-.41h-3.84c-.24 0-.43.17-.47.41l-.36 2.54c-.59.24-1.13.57-1.62.94l-2.39-.96c-.22-.08-.47 0-.59.22L2.74 8.87c-.12.21-.08.47.12.61l2.03 1.58c-.05.3-.09.63-.09.94s.02.64.07.94l-2.03 1.58c-.18.14-.23.41-.12.61l1.92 3.32c.12.22.37.29.59.22l2.39-.96c.5.38 1.03.7 1.62.94l.36 2.54c.05.24.24.41.48.41h3.84c.24 0 .44-.17.47-.41l.36-2.54c.59-.24 1.13-.56 1.62-.94l2.39.96c.22.08.47 0 .59-.22l1.92-3.32c.12-.22.07-.47-.12-.61l-2.01-1.58zM12 15.6c-1.98 0-3.6-1.62-3.6-3.6s1.62-3.6 3.6-3.6 3.6 1.62 3.6 3.6-1.62 3.6-3.6 3.6z"/></svg>
<div style="position:absolute;left:484px;top:316px;width:97px;height:25px;background:#ececec;border-radius:2px"></div>
<div class="t" style="left:484.0px;width:97px;text-align:center;top:323.80px;font-size:12.88px;line-height:12.88px;color:#1b66a3;font-weight:normal;transform:scaleX(0.8929);transform-origin:50% 0;">EXPAND ALL</div>
<div style="position:absolute;left:781px;top:316px;width:75px;height:25px;background:#0b5c97;border-radius:2px"></div>
<div class="t" style="left:781.0px;width:75px;text-align:center;top:323.80px;font-size:12.88px;line-height:12.88px;color:#fff;font-weight:normal;transform:scaleX(0.8929);transform-origin:50% 0;">DELETE</div>
<div style="position:absolute;left:866px;top:316px;width:80px;height:25px;background:#0b5c97;border-radius:2px"></div>
<div class="t" style="left:866.0px;width:80px;text-align:center;top:323.80px;font-size:12.88px;line-height:12.88px;color:#fff;font-weight:normal;transform:scaleX(0.8929);transform-origin:50% 0;">ADD BILL</div>
<div style="position:absolute;left:484px;top:349px;width:461px;height:628px;box-sizing:border-box;border:1px solid #dedede;background:#fff"></div>
<div style="position:absolute;left:484px;top:349px;width:461px;height:628px;overflow:hidden">
<div style="position:absolute;left:1px;top:47px;width:444px;height:28px;background:#eaf2f6"></div>
<div style="position:absolute;left:1px;top:103px;width:444px;height:28px;background:#eaf2f6"></div>
<div style="position:absolute;left:1px;top:159px;width:444px;height:28px;background:#eaf2f6"></div>
<div style="position:absolute;left:1px;top:215px;width:444px;height:28px;background:#eaf2f6"></div>
<div style="position:absolute;left:1px;top:271px;width:444px;height:28px;background:#eaf2f6"></div>
<div style="position:absolute;left:1px;top:327px;width:444px;height:28px;background:#eaf2f6"></div>
<div style="position:absolute;left:1px;top:383px;width:444px;height:28px;background:#eaf2f6"></div>
<div style="position:absolute;left:1px;top:439px;width:444px;height:28px;background:#eaf2f6"></div>
<div style="position:absolute;left:1px;top:495px;width:444px;height:28px;background:#eaf2f6"></div>
<div style="position:absolute;left:1px;top:551px;width:444px;height:28px;background:#eaf2f6"></div>
<div style="position:absolute;left:1px;top:607px;width:444px;height:4px;background:#eaf2f6"></div>
<div style="position:absolute;left:30px;top:1px;width:1px;height:610px;background:#e3e6e8"></div>
<div style="position:absolute;left:110px;top:1px;width:1px;height:610px;background:#e3e6e8"></div>
<div style="position:absolute;left:185px;top:1px;width:1px;height:610px;background:#e3e6e8"></div>
<div style="position:absolute;left:260px;top:1px;width:1px;height:610px;background:#e3e6e8"></div>
<div style="position:absolute;left:330px;top:1px;width:1px;height:610px;background:#e3e6e8"></div>
<div style="position:absolute;left:405px;top:1px;width:1px;height:610px;background:#e3e6e8"></div>
<div style="position:absolute;left:1px;top:46px;width:444px;height:1px;background:#d6d6d6"></div>
</div>
<div class="t" style="left:520px;top:351.80px;font-size:12.88px;line-height:12.88px;color:#222;font-weight:normal;transform:scaleX(0.8929);transform-origin:0 0;">Order /</div>
<div class="t" style="left:520px;top:366.80px;font-size:12.88px;line-height:12.88px;color:#222;font-weight:normal;transform:scaleX(0.8929);transform-origin:0 0;">Item /</div>
<div class="t" style="left:520px;top:381.80px;font-size:12.88px;line-height:12.88px;color:#222;font-weight:normal;transform:scaleX(0.8929);transform-origin:0 0;">Expense</div>
<div class="t" style="left:600px;top:360.10px;font-size:12.88px;line-height:12.88px;color:#222;font-weight:normal;transform:scaleX(0.8929);transform-origin:0 0;">Vendor /</div>
<div class="t" style="left:600px;top:375.10px;font-size:12.88px;line-height:12.88px;color:#222;font-weight:normal;transform:scaleX(0.8929);transform-origin:0 0;">Description</div>
<div class="t" style="left:675px;top:366.80px;font-size:12.88px;line-height:12.88px;color:#222;font-weight:normal;transform:scaleX(0.8929);transform-origin:0 0;">Memo</div>
<div class="t" style="left:750px;top:366.80px;font-size:12.88px;line-height:12.88px;color:#222;font-weight:normal;transform:scaleX(0.8929);transform-origin:0 0;">Amount</div>
<div class="t" style="left:820px;top:360.10px;font-size:12.88px;line-height:12.88px;color:#222;font-weight:normal;transform:scaleX(0.8929);transform-origin:0 0;">Unallocated</div>
<div class="t" style="left:820px;top:375.10px;font-size:12.88px;line-height:12.88px;color:#222;font-weight:normal;transform:scaleX(0.8929);transform-origin:0 0;">Amt.</div>
<div class="t" style="left:895px;top:360.10px;font-size:12.88px;line-height:12.88px;color:#222;font-weight:normal;transform:scaleX(0.8929);transform-origin:0 0;">Amount</div>
<div class="t" style="left:895px;top:375.10px;font-size:12.88px;line-height:12.88px;color:#222;font-weight:normal;transform:scaleX(0.8929);transform-origin:0 0;">Allocated</div>
<div style="position:absolute;left:944px;top:350px;width:1px;height:45px;background:#fff"></div>
<svg style="position:absolute;left:491px;top:401px;" width="18" height="18" viewBox="0 0 18 18"><rect x="1" y="1" width="16" height="16" rx="2" fill="none" stroke="#0b5c97" stroke-width="2"/></svg>
<svg style="position:absolute;left:523px;top:404px;" width="14" height="13" viewBox="0 0 14 13"><rect x="0" y="0" width="14" height="3" fill="#0b5c97"/><rect x="0" y="4.5" width="14" height="1.5" fill="#0b5c97"/><rect x="0" y="7.5" width="14" height="1.5" fill="#0b5c97"/><rect x="0" y="10.5" width="14" height="1.5" fill="#0b5c97"/></svg>
<div style="position:absolute;left:514px;top:396px;width:80px;height:28px;overflow:hidden">
<div class="t" style="left:30px;top:8.80px;font-size:12.88px;line-height:12.88px;color:#1b66a3;font-weight:normal;transform:scaleX(0.8929);transform-origin:0 0;">B-0013534</div>
</div>
<div style="position:absolute;left:594px;top:396px;width:75px;height:28px;overflow:hidden">
<div class="t" style="left:6px;top:8.80px;font-size:12.88px;line-height:12.88px;color:#222;font-weight:normal;transform:scaleX(0.8929);transform-origin:0 0;">ktest-vendor</div>
</div>
<div class="t" style="left:675px;top:404.80px;font-size:12.88px;line-height:12.88px;color:#222;font-weight:normal;transform:scaleX(0.8929);transform-origin:0 0;">PO-0013534</div>
<div class="t" style="left:750px;top:404.80px;font-size:12.88px;line-height:12.88px;color:#222;font-weight:normal;transform:scaleX(0.8929);transform-origin:0 0;">$34.00</div>
<div class="t" style="left:820px;top:404.80px;font-size:12.88px;line-height:12.88px;color:#222;font-weight:normal;transform:scaleX(0.8929);transform-origin:0 0;">$34.00</div>
<div style="position:absolute;left:933px;top:411px;width:7px;height:294px;background:#dcdcdc"></div>
<svg style="position:absolute;left:932px;top:401px;" width="9" height="6" viewBox="0 0 9 6"><path d="M1 5 L4.5 1.5 L8 5" fill="none" stroke="#e0e0e0" stroke-width="1"/></svg>
<svg style="position:absolute;left:932px;top:950px;" width="9" height="6" viewBox="0 0 9 6"><path d="M1 1 L4.5 4.5 L8 1" fill="none" stroke="#e0e0e0" stroke-width="1"/></svg>
<div style="position:absolute;left:500px;top:965px;width:383px;height:7px;background:#dcdcdc"></div>
<svg style="position:absolute;left:487px;top:963px;" width="7" height="11" viewBox="0 0 7 11"><path d="M5.5 1 L1.5 5.5 L5.5 10" fill="none" stroke="#e0e0e0" stroke-width="1"/></svg>
<svg style="position:absolute;left:918px;top:963px;" width="7" height="11" viewBox="0 0 7 11"><path d="M1.5 1 L5.5 5.5 L1.5 10" fill="none" stroke="#e0e0e0" stroke-width="1"/></svg>
<div style="position:absolute;left:953px;top:261px;width:2px;height:764px;background:#f0f0f0"></div>
<div class="t" style="left:663px;top:992.30px;font-size:12.88px;line-height:12.88px;color:#222;font-weight:normal;transform:scaleX(0.8929);transform-origin:0 0;">Split By:</div>
<div style="position:absolute;left:710px;top:985px;width:150px;height:25px;background:#f3f3f3;border-radius:2px"></div>
<div class="t" style="left:715px;top:992.30px;font-size:12.88px;line-height:12.88px;color:#222;font-weight:normal;transform:scaleX(0.8929);transform-origin:0 0;">Qty</div>
<svg style="position:absolute;left:843px;top:995px;" width="10" height="7" viewBox="0 0 10 7"><path d="M0 0 H10 L5 6.5 Z" fill="#aaaaaa"/></svg>
<div style="position:absolute;left:870px;top:985px;width:75px;height:25px;background:#c8c8c8;border-radius:2px"></div>
<div class="t" style="left:870.0px;width:75px;text-align:center;top:992.80px;font-size:12.88px;line-height:12.88px;color:#f4f4f4;font-weight:normal;transform:scaleX(0.8929);transform-origin:50% 0;">APPLY</div>
<div class="t" style="left:963px;top:283.29px;font-size:15.25px;line-height:15.25px;color:#333333;font-weight:normal;transform:scaleX(1.0000);transform-origin:0 0;">Select Items to Add Landed Cost</div>
<svg style="position:absolute;left:1575px;top:275px;" width="90" height="30" viewBox="0 0 90 30"><g transform="translate(17,14)"><path d="M-5.5 0.5 A5.5 5.5 0 0 1 3.5 -4.3" fill="none" stroke="#0b5c97" stroke-width="1.8"/><path d="M5.5 -0.5 A5.5 5.5 0 0 1 -3.5 4.3" fill="none" stroke="#0b5c97" stroke-width="1.8"/><path d="M-8.3 0 H-2.7 L-5.5 3.3 Z" fill="#0b5c97"/><path d="M8.3 0 H2.7 L5.5 -3.3 Z" fill="#0b5c97"/></g><circle cx="44.7" cy="14" r="8" fill="#0b5c97"/><path d="M41.400000000000006 10.7 L48.0 17.3 M48.0 10.7 L41.400000000000006 17.3" stroke="#fff" stroke-width="1.1"/></svg>
<svg style="position:absolute;left:1634.88px;top:277.88px" width="22.25" height="22.25" viewBox="0 0 24 24"><path fill-rule="evenodd" fill="#0b5c97" d="M19.14 12.94c.04-.3.06-.61.06-.94 0-.32-.02-.64-.07-.94l2.03-1.58c.18-.14.23-.41.12-.61l-1.92-3.32c-.12-.22-.37-.29-.59-.22l-2.39.96c-.5-.38-1.03-.7-1.62-.94l-.36-2.54c-.04-.24-.24-.41-.48-.41h-3.84c-.24 0-.43.17-.47.41l-.36 2.54c-.59.24-1.13.57-1.62.94l-2.39-.96c-.22-.08-.47 0-.59.22L2.74 8.87c-.12.21-.08.47.12.61l2.03 1.58c-.05.3-.09.63-.09.94s.02.64.07.94l-2.03 1.58c-.18.14-.23.41-.12.61l1.92 3.32c.12.22.37.29.59.22l2.39-.96c.5.38 1.03.7 1.62.94l.36 2.54c.05.24.24.41.48.41h3.84c.24 0 .44-.17.47-.41l.36-2.54c.59-.24 1.13-.56 1.62-.94l2.39.96c.22.08.47 0 .59-.22l1.92-3.32c.12-.22.07-.47-.12-.61l-2.01-1.58zM12 15.6c-1.98 0-3.6-1.62-3.6-3.6s1.62-3.6 3.6-3.6 3.6 1.62 3.6 3.6-1.62 3.6-3.6 3.6z"/></svg>
<div style="position:absolute;left:1440px;top:316px;width:75px;height:25px;background:#0b5c97;border-radius:2px"></div>
<div class="t" style="left:1440.0px;width:75px;text-align:center;top:323.80px;font-size:12.88px;line-height:12.88px;color:#fff;font-weight:normal;transform:scaleX(0.8929);transform-origin:50% 0;">DELETE</div>
<div style="position:absolute;left:1525px;top:316px;width:108px;height:25px;background:#0b5c97;border-radius:2px"></div>
<div class="t" style="left:1525.0px;width:108px;text-align:center;top:323.80px;font-size:12.88px;line-height:12.88px;color:#fff;font-weight:normal;transform:scaleX(0.8929);transform-origin:50% 0;">ADD PO ITEMS</div>
<div style="position:absolute;left:1634px;top:316px;width:22px;height:25px;background:#0b5c97;border-radius:2px"></div>
<svg style="position:absolute;left:1641px;top:327px;" width="8" height="5" viewBox="0 0 8 5"><path d="M0 0 H8 L4 4.3 Z" fill="#fff"/></svg>
<div style="position:absolute;left:963px;top:349px;width:703px;height:628px;box-sizing:border-box;border:1px solid #dedede;background:#fff"></div>
<div style="position:absolute;left:963px;top:349px;width:703px;height:628px;overflow:hidden">
<div style="position:absolute;left:1px;top:31px;width:686px;height:46px;background:#eaf2f6"></div>
<div style="position:absolute;left:1px;top:105px;width:686px;height:28px;background:#eaf2f6"></div>
<div style="position:absolute;left:1px;top:161px;width:686px;height:28px;background:#eaf2f6"></div>
<div style="position:absolute;left:1px;top:217px;width:686px;height:28px;background:#eaf2f6"></div>
<div style="position:absolute;left:1px;top:273px;width:686px;height:28px;background:#eaf2f6"></div>
<div style="position:absolute;left:1px;top:329px;width:686px;height:28px;background:#eaf2f6"></div>
<div style="position:absolute;left:1px;top:385px;width:686px;height:28px;background:#eaf2f6"></div>
<div style="position:absolute;left:1px;top:441px;width:686px;height:28px;background:#eaf2f6"></div>
<div style="position:absolute;left:1px;top:497px;width:686px;height:28px;background:#eaf2f6"></div>
<div style="position:absolute;left:1px;top:553px;width:686px;height:28px;background:#eaf2f6"></div>
<div style="position:absolute;left:1px;top:609px;width:686px;height:2px;background:#eaf2f6"></div>
<div style="position:absolute;left:30px;top:1px;width:1px;height:610px;background:#e3e6e8"></div>
<div style="position:absolute;left:110px;top:1px;width:1px;height:610px;background:#e3e6e8"></div>
<div style="position:absolute;left:185px;top:1px;width:1px;height:610px;background:#e3e6e8"></div>
<div style="position:absolute;left:265px;top:1px;width:1px;height:610px;background:#e3e6e8"></div>
<div style="position:absolute;left:355px;top:1px;width:1px;height:610px;background:#e3e6e8"></div>
<div style="position:absolute;left:425px;top:1px;width:1px;height:610px;background:#e3e6e8"></div>
<div style="position:absolute;left:495px;top:1px;width:1px;height:610px;background:#e3e6e8"></div>
<div style="position:absolute;left:565px;top:1px;width:1px;height:610px;background:#e3e6e8"></div>
<div style="position:absolute;left:635px;top:1px;width:1px;height:610px;background:#e3e6e8"></div>
<div style="position:absolute;left:1px;top:31px;width:686px;height:1px;background:#d6d6d6"></div>
</div>
<div class="t" style="left:999px;top:360.30px;font-size:12.88px;line-height:12.88px;color:#222;font-weight:normal;transform:scaleX(0.8929);transform-origin:0 0;">Order #</div>
<div class="t" style="left:1079px;top:360.30px;font-size:12.88px;line-height:12.88px;color:#222;font-weight:normal;transform:scaleX(0.8929);transform-origin:0 0;">Name</div>
<div class="t" style="left:1154px;top:360.30px;font-size:12.88px;line-height:12.88px;color:#222;font-weight:normal;transform:scaleX(0.8929);transform-origin:0 0;">Item</div>
<div class="t" style="left:1234px;top:360.30px;font-size:12.88px;line-height:12.88px;color:#222;font-weight:normal;transform:scaleX(0.8929);transform-origin:0 0;">Description</div>
<div class="t" style="left:1324px;top:360.30px;font-size:12.88px;line-height:12.88px;color:#222;font-weight:normal;transform:scaleX(0.8929);transform-origin:0 0;">Qty</div>
<div class="t" style="left:1394px;top:360.30px;font-size:12.88px;line-height:12.88px;color:#222;font-weight:normal;transform:scaleX(0.8929);transform-origin:0 0;">CBM</div>
<div class="t" style="left:1464px;top:360.30px;font-size:12.88px;line-height:12.88px;color:#222;font-weight:normal;transform:scaleX(0.8929);transform-origin:0 0;">Cost</div>
<div class="t" style="left:1534px;top:360.30px;font-size:12.88px;line-height:12.88px;color:#222;font-weight:normal;transform:scaleX(0.8929);transform-origin:0 0;">Amount</div>
<div style="position:absolute;left:1598px;top:350px;width:52px;height:30px;overflow:hidden">
<div class="t" style="left:6px;top:10.30px;font-size:12.88px;line-height:12.88px;color:#222;font-weight:normal;transform:scaleX(0.8929);transform-origin:0 0;">Percent %</div>
</div>
<svg style="position:absolute;left:970px;top:395px;" width="18" height="18" viewBox="0 0 18 18"><rect x="1" y="1" width="16" height="16" rx="2" fill="none" stroke="#0b5c97" stroke-width="2"/></svg>
<svg style="position:absolute;left:1004px;top:403px;" width="11" height="8" viewBox="0 0 11 8"><path d="M0 7.5 H11 L5.5 0 Z" fill="#0b5c97"/></svg>
<div style="position:absolute;left:993px;top:380px;width:80px;height:46px;overflow:hidden">
<div class="t" style="left:30px;top:18.30px;font-size:12.88px;line-height:12.88px;color:#1b66a3;font-weight:normal;transform:scaleX(0.8929);transform-origin:0 0;">PO-0013534</div>
</div>
<div class="t" style="left:1079px;top:398.30px;font-size:12.88px;line-height:12.88px;color:#222;font-weight:normal;transform:scaleX(0.8929);transform-origin:0 0;">ktest-vendor</div>
<div class="t" style="left:1154px;top:383.30px;font-size:12.88px;line-height:12.88px;color:#222;font-weight:normal;transform:scaleX(0.8929);transform-origin:0 0;">1.5 Ah</div>
<div class="t" style="left:1154px;top:398.30px;font-size:12.88px;line-height:12.88px;color:#222;font-weight:normal;transform:scaleX(0.8929);transform-origin:0 0;">Compact</div>
<div class="t" style="left:1154px;top:413.30px;font-size:12.88px;line-height:12.88px;color:#222;font-weight:normal;transform:scaleX(0.8929);transform-origin:0 0;">Batteries</div>
<div class="t" style="left:1234px;top:398.30px;font-size:12.88px;line-height:12.88px;color:#222;font-weight:normal;transform:scaleX(0.8929);transform-origin:0 0;">123432</div>
<div class="t" style="left:1324px;top:398.30px;font-size:12.88px;line-height:12.88px;color:#222;font-weight:normal;transform:scaleX(0.8929);transform-origin:0 0;">20</div>
<div class="t" style="left:1464px;top:398.30px;font-size:12.88px;line-height:12.88px;color:#222;font-weight:normal;transform:scaleX(0.8929);transform-origin:0 0;">$50.00</div>
<div class="t" style="left:1534px;top:398.30px;font-size:12.88px;line-height:12.88px;color:#222;font-weight:normal;transform:scaleX(0.8929);transform-origin:0 0;">$1,000.00</div>
<svg style="position:absolute;left:970px;top:431px;" width="18" height="18" viewBox="0 0 18 18"><rect x="1" y="1" width="16" height="16" rx="2" fill="none" stroke="#0b5c97" stroke-width="2"/></svg>
<div class="t" style="left:1023px;top:435.30px;font-size:12.88px;line-height:12.88px;color:#222;font-weight:normal;transform:scaleX(0.8929);transform-origin:0 0;">Tariff</div>
<svg style="position:absolute;left:1132px;top:438px;" width="10" height="7" viewBox="0 0 10 7"><path d="M0 0 H10 L5 6.5 Z" fill="#bdbdbd"/></svg>
<svg style="position:absolute;left:970px;top:459px;" width="18" height="18" viewBox="0 0 18 18"><rect x="1" y="1" width="16" height="16" rx="2" fill="none" stroke="#0b5c97" stroke-width="2"/></svg>
<div class="t" style="left:1023px;top:463.30px;font-size:12.88px;line-height:12.88px;color:#222;font-weight:normal;transform:scaleX(0.8929);transform-origin:0 0;">Duty</div>
<svg style="position:absolute;left:1132px;top:466px;" width="10" height="7" viewBox="0 0 10 7"><path d="M0 0 H10 L5 6.5 Z" fill="#bdbdbd"/></svg>
<div style="position:absolute;left:1654px;top:396px;width:7px;height:256px;background:#dcdcdc"></div>
<svg style="position:absolute;left:1654px;top:386px;" width="9" height="6" viewBox="0 0 9 6"><path d="M1 5 L4.5 1.5 L8 5" fill="none" stroke="#e0e0e0" stroke-width="1"/></svg>
<svg style="position:absolute;left:1654px;top:950px;" width="9" height="6" viewBox="0 0 9 6"><path d="M1 1 L4.5 4.5 L8 1" fill="none" stroke="#e0e0e0" stroke-width="1"/></svg>
<div style="position:absolute;left:980px;top:965px;width:580px;height:7px;background:#dcdcdc"></div>
<svg style="position:absolute;left:966px;top:963px;" width="7" height="11" viewBox="0 0 7 11"><path d="M5.5 1 L1.5 5.5 L5.5 10" fill="none" stroke="#e0e0e0" stroke-width="1"/></svg>
<svg style="position:absolute;left:1639px;top:963px;" width="7" height="11" viewBox="0 0 7 11"><path d="M1.5 1 L5.5 5.5 L1.5 10" fill="none" stroke="#e0e0e0" stroke-width="1"/></svg>
<div style="position:absolute;left:1447px;top:985px;width:75px;height:25px;background:#ececec;border-radius:2px"></div>
<div class="t" style="left:1447.0px;width:75px;text-align:center;top:992.80px;font-size:12.88px;line-height:12.88px;color:#1b66a3;font-weight:normal;transform:scaleX(0.8929);transform-origin:50% 0;">CANCEL</div>
<div style="position:absolute;left:1532px;top:985px;width:134px;height:25px;background:#c8c8c8;border-radius:2px"></div>
<div class="t" style="left:1532.0px;width:134px;text-align:center;top:992.80px;font-size:12.88px;line-height:12.88px;color:#f4f4f4;font-weight:normal;transform:scaleX(0.8929);transform-origin:50% 0;">ADD LANDED COST</div>
<div style="position:absolute;left:910px;top:304px;width:138px;height:78px;background:#fff;box-sizing:border-box;border:1px solid #b4b4b4"></div>
<div class="t" style="left:915px;top:314.82px;font-size:13.44px;line-height:13.44px;color:#222;font-weight:normal;transform:scaleX(0.8929);transform-origin:0 0;">Vendor/Description</div>
<svg style="position:absolute;left:1025px;top:312px;" width="18" height="18" viewBox="0 0 18 18"><rect x="0" y="0" width="18" height="18" rx="2" fill="#0b5c97"/><path d="M2.9 8.9 L7 13.2 L15.3 4.4" fill="none" stroke="#fff" stroke-width="1.9"/></svg>
<div class="t" style="left:915px;top:337.82px;font-size:13.44px;line-height:13.44px;color:#222;font-weight:normal;transform:scaleX(0.8929);transform-origin:0 0;">Memo</div>
<svg style="position:absolute;left:1025px;top:335px;" width="18" height="18" viewBox="0 0 18 18"><rect x="0" y="0" width="18" height="18" rx="2" fill="#0b5c97"/><path d="M2.9 8.9 L7 13.2 L15.3 4.4" fill="none" stroke="#fff" stroke-width="1.9"/></svg>
<div class="t" style="left:915px;top:360.82px;font-size:13.44px;line-height:13.44px;color:#222;font-weight:normal;transform:scaleX(0.8929);transform-origin:0 0;">Amount</div>
<svg style="position:absolute;left:1025px;top:358px;" width="18" height="18" viewBox="0 0 18 18"><rect x="0" y="0" width="18" height="18" rx="2" fill="#0b5c97"/><path d="M2.9 8.9 L7 13.2 L15.3 4.4" fill="none" stroke="#fff" stroke-width="1.9"/></svg>
<div style="position:absolute;left:668px;top:344px;width:81px;height:81px;box-sizing:border-box;border:4px solid #f5564a;filter:drop-shadow(2px 2px 1.5px rgba(0,0,0,0.85))"></div>
<div style="position:absolute;left:871px;top:267px;width:208px;height:133px;box-sizing:border-box;border:4px solid #f5564a;filter:drop-shadow(2px 2px 1.5px rgba(0,0,0,0.85))"></div>
</body></html>
